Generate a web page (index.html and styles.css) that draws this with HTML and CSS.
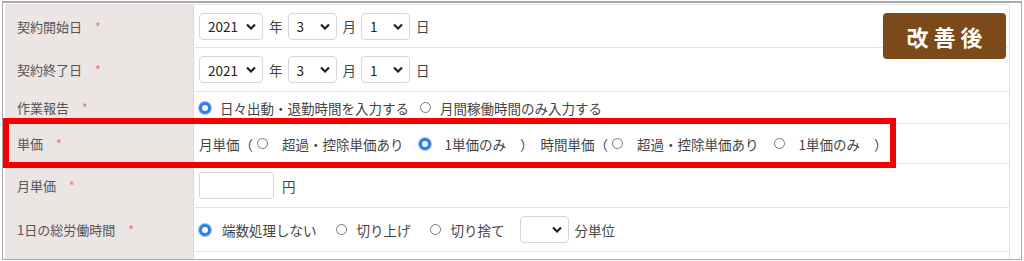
FILE: index.html
```html
<!DOCTYPE html>
<html lang="ja">
<head>
    <meta charset="UTF-8">
    <title>契約情報</title>
    <link rel="stylesheet" href="styles.css">
</head>
<body>
    <div class="frame">
        <div class="form">
            <div class="row r-date">
                <div class="label">契約開始日<span class="req">*</span></div>
                <div class="value">
                    <span class="select sel-year">2021<svg viewBox="0 0 10 7"><path d="M1 1.5 L5 5.5 L9 1.5"/></svg></span><span class="unit">年</span>
                    <span class="select sel-num">3<svg viewBox="0 0 10 7"><path d="M1 1.5 L5 5.5 L9 1.5"/></svg></span><span class="unit">月</span>
                    <span class="select sel-num">1<svg viewBox="0 0 10 7"><path d="M1 1.5 L5 5.5 L9 1.5"/></svg></span><span class="unit">日</span>
                </div>
            </div>
            <div class="row r-date2">
                <div class="label">契約終了日<span class="req">*</span></div>
                <div class="value">
                    <span class="select sel-year">2021<svg viewBox="0 0 10 7"><path d="M1 1.5 L5 5.5 L9 1.5"/></svg></span><span class="unit">年</span>
                    <span class="select sel-num">3<svg viewBox="0 0 10 7"><path d="M1 1.5 L5 5.5 L9 1.5"/></svg></span><span class="unit">月</span>
                    <span class="select sel-num">1<svg viewBox="0 0 10 7"><path d="M1 1.5 L5 5.5 L9 1.5"/></svg></span><span class="unit">日</span>
                </div>
            </div>
            <div class="row r-report">
                <div class="label">作業報告<span class="req">*</span></div>
                <div class="value">
                    <span class="radio checked"></span><span class="opt">日々出動・退勤時間を入力する</span>
                    <span class="radio"></span><span class="opt">月間稼働時間のみ入力する</span>
                </div>
            </div>
            <div class="row r-price">
                <div class="label">単価<span class="req">*</span></div>
                <div class="value">
                    <span class="group">月単価（</span>
                    <span class="radio"></span><span class="opt">超過・控除単価あり</span>
                    <span class="radio checked"></span><span class="opt">1単価のみ</span>
                    <span class="group close">）</span><span class="group">時間単価（</span>
                    <span class="radio"></span><span class="opt">超過・控除単価あり</span>
                    <span class="radio"></span><span class="opt">1単価のみ</span>
                    <span class="group close">）</span>
                </div>
            </div>
            <div class="row r-month">
                <div class="label">月単価<span class="req">*</span></div>
                <div class="value">
                    <span class="input"></span><span class="unit yen">円</span>
                </div>
            </div>
            <div class="row r-hours">
                <div class="label">1日の総労働時間<span class="req">*</span></div>
                <div class="value">
                    <span class="radio checked"></span><span class="opt">端数処理しない</span>
                    <span class="radio"></span><span class="opt">切り上げ</span>
                    <span class="radio"></span><span class="opt last">切り捨て</span>
                    <span class="select sel-empty"><svg viewBox="0 0 10 7"><path d="M1 1.5 L5 5.5 L9 1.5"/></svg></span><span class="unit">分単位</span>
                </div>
            </div>
            <div class="row r-last">
                <div class="label"></div>
                <div class="value"></div>
            </div>
        </div>
        <div class="badge">改善後</div>
        <div class="highlight"></div>
    </div>
</body>
</html>
```

FILE: styles.css
```css
body {
    margin: 0;
    background: #fff;
    font-family: "Noto Sans CJK JP", "Noto Sans", sans-serif;
    font-size: 13.5px;
    color: #444;
}
.frame {
    position: relative;
    margin: 1px 0 0 2px;
    width: 1020px;
    height: 259px;
    border: 1px solid #a9a9a9;
    border-top-width: 2px;
    box-sizing: border-box;
    padding: 1px 11px 0 2px;
    overflow: hidden;
}
.form {
    border-top: 1px solid #e4e4e4;
    border-right: 1px solid #e4e4e4;
}
.row {
    display: flex;
    box-sizing: border-box;
    border-bottom: 1px solid #e4e4e4;
}
.r-date { height: 43px; }
.r-date2 { height: 44px; }
.r-report { height: 32px; }
.r-price { height: 40px; }
.r-month { height: 44px; }
.r-hours { height: 44px; }
.r-last { height: 20px; }
.label {
    width: 189px;
    flex: none;
    background: #ebe5e3;
    border-right: 1px solid #dcd5d3;
    display: flex;
    align-items: center;
    padding-left: 12px;
    box-sizing: border-box;
    color: #555;
    font-size: 13px;
}
.req {
    color: #e3728d;
    margin-left: 13px;
    font-size: 12px;
}
.value {
    flex: 1;
    display: flex;
    align-items: center;
    padding-left: 5px;
}
.select {
    display: inline-flex;
    align-items: center;
    justify-content: space-between;
    box-sizing: border-box;
    height: 27px;
    border: 1px solid #d6d6d6;
    border-radius: 4px;
    padding: 0 6px 0 8px;
    color: #222;
    background: #fff;
}
.select svg {
    width: 10px;
    height: 7px;
    fill: none;
    stroke: #222;
    stroke-width: 2.2;
}
.sel-year { width: 64px; }
.sel-num { width: 49px; }
.sel-empty { width: 49px; justify-content: flex-end; }
.unit {
    margin: 0 5px 0 6px;
}
.unit.yen { margin-left: 8px; }
.input {
    display: inline-block;
    width: 75px;
    height: 27px;
    box-sizing: border-box;
    border: 1px solid #d6d6d6;
    border-radius: 3px;
}
.radio {
    display: inline-block;
    box-sizing: border-box;
    width: 11px;
    height: 11px;
    border: 1px solid #777;
    border-radius: 50%;
    margin-right: 9px;
    flex: none;
}
.radio.checked {
    width: 12px;
    height: 12px;
    border: 3px solid #2f7de8;
    background: #fff;
    box-shadow: 0 0 0 1px #9cc2f2;
}
.opt {
    margin-right: 11px;
}
/* 単価 row */
.r-price .radio {
    margin-left: 4px;
    margin-right: 14px;
}
.r-price .opt {
    margin-right: 11px;
}
.group.close {
    margin-left: 3px;
    margin-right: 7px;
}
/* 総労働時間 row */
.r-hours .radio {
    margin-right: 10px;
}
.r-hours .radio.checked {
    margin-right: 11px;
}
.r-hours .opt {
    margin-right: 19px;
}
.r-hours .opt.last {
    margin-right: 15px;
}
.badge {
    position: absolute;
    left: 880px;
    top: 10px;
    width: 123px;
    height: 46px;
    background: #7c4a19;
    border-radius: 4px;
    color: #fff;
    font-weight: bold;
    font-size: 22px;
    letter-spacing: 5px;
    display: flex;
    align-items: center;
    justify-content: center;
    padding-left: 5px;
    box-sizing: border-box;
}
.highlight {
    position: absolute;
    left: 0;
    top: 115px;
    width: 893px;
    height: 50px;
    border: 6px solid #f50000;
    box-sizing: border-box;
}
```
